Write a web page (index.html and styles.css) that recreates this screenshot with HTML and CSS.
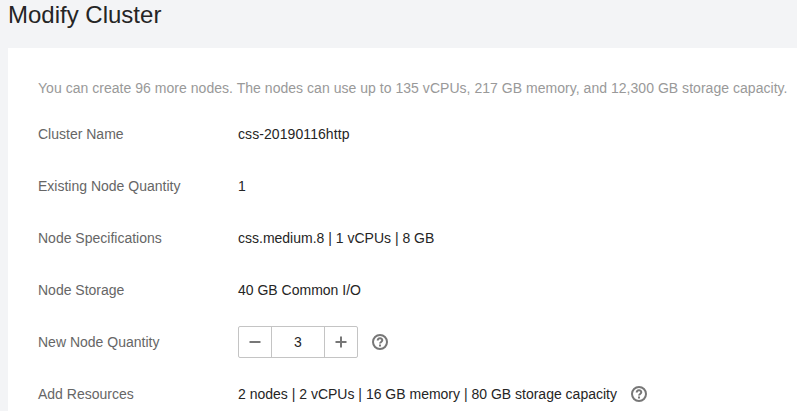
FILE: index.html
```html
<!DOCTYPE html>
<html lang="en">
<head>
<meta charset="utf-8">
<title>Modify Cluster</title>
<link rel="stylesheet" href="styles.css">
</head>
<body>
<h1 class="title">Modify Cluster</h1>
<main class="panel">
  <p class="quota">You can create 96 more nodes. The nodes can use up to 135 vCPUs, 217 GB memory, and 12,300 GB storage capacity.</p>
  <dl class="form">
    <div class="row"><dt>Cluster Name</dt><dd><span class="name">css-20190116http</span></dd></div>
    <div class="row"><dt>Existing Node Quantity</dt><dd>1</dd></div>
    <div class="row"><dt>Node Specifications</dt><dd>css.medium.8 | 1 vCPUs | 8 GB</dd></div>
    <div class="row"><dt>Node Storage</dt><dd>40 GB Common I/O</dd></div>
    <div class="row"><dt>New Node Quantity</dt><dd>
      <div class="stepper">
        <button class="step" aria-label="Decrease"><svg width="12" height="12" viewBox="0 0 12 12"><path d="M.5 6h11"/></svg></button>
        <span class="count">3</span>
        <button class="step" aria-label="Increase"><svg width="12" height="12" viewBox="0 0 12 12"><path d="M.5 6h11M6 .5v11"/></svg></button>
      </div>
      <svg class="help" width="16" height="16" viewBox="0 0 16 16"><circle cx="8" cy="8" r="7"/><path d="M5.7 6.6C5.7 3.5 10.3 3.5 10.3 6.3C10.3 8 8 7.9 8 9.6M8 10.6v1.8"/></svg>
    </dd></div>
    <div class="row"><dt>Add Resources</dt><dd><span class="resources">2 nodes | 2 vCPUs | 16 GB memory | 80 GB storage capacity</span>
      <svg class="help" width="16" height="16" viewBox="0 0 16 16"><circle cx="8" cy="8" r="7"/><path d="M5.7 6.6C5.7 3.5 10.3 3.5 10.3 6.3C10.3 8 8 7.9 8 9.6M8 10.6v1.8"/></svg>
    </dd></div>
  </dl>
</main>
</body>
</html>
```
FILE: styles.css
```css
* { box-sizing: border-box; }
body {
  margin: 0;
  height: 411px;
  overflow: hidden;
  background: #f3f4f6;
  color: #252525;
  font: 14px/20px "Liberation Sans", Arial, sans-serif;
}
.title { margin: 0; padding: 0 8px; height: 48px; font-size: 24px; line-height: 30px; font-weight: 400; }
.panel { margin-left: 8px; height: 363px; padding: 30px 0 0 30px; background: #fff; }
.quota { margin: 0; height: 30px; color: #999; white-space: nowrap; letter-spacing: .033px; }
.form { margin: 0; }
.row { display: flex; align-items: center; height: 52px; }
dt { width: 200px; color: #666; }
dd { display: flex; align-items: center; margin: 0; white-space: nowrap; }
.name { letter-spacing: .08px; }
.stepper { display: flex; width: 120px; height: 32px; border: 1px solid #c4c4c4; border-radius: 2px; }
.step { display: flex; align-items: center; justify-content: center; width: 32px; padding: 0; border: 0; background: none; }
.step svg { fill: none; stroke: #777; stroke-width: 2; }
.count { flex: 1; border: solid #c4c4c4; border-width: 0 1px; text-align: center; line-height: 30px; }
.help { margin-left: 14px; fill: none; stroke: #777; stroke-width: 2; }
```
